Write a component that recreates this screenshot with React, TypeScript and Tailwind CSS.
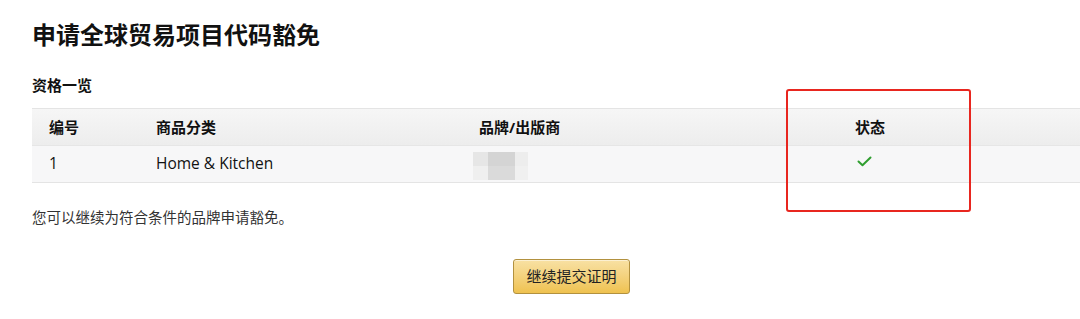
const font = { fontFamily: '"Open Sans", "Noto Sans CJK SC", sans-serif' };

function Mosaic() {
  // blurred brand name, kept as a rough pixel block
  return (
    <div className="grid grid-cols-[15px_27px_13px] grid-rows-[14px_14px]">
      <div className="bg-[#e6e6e6]" />
      <div className="bg-[#d4d4d4]" />
      <div className="bg-[#ededed]" />
      <div className="bg-[#efefef]" />
      <div className="bg-[#dadada]" />
      <div className="bg-[#f0f0f0]" />
    </div>
  );
}

function Check() {
  return (
    <svg width="15" height="11" viewBox="0 0 15 11" fill="none">
      <path d="M1.5 5.5 L5.5 9.2 L13.5 1.5" stroke="#2f9e2f" strokeWidth="2" strokeLinecap="round" strokeLinejoin="round" />
    </svg>
  );
}

export default function App() {
  return (
    <div className="relative h-[319px] w-[1080px] overflow-hidden bg-white text-[#111]" style={font}>
      <div className="pl-8 pt-[19px]">
        <h1 className="text-[24px] font-bold leading-[32px]">申请全球贸易项目代码豁免</h1>
        <h2 className="mt-[24px] text-[15px] font-bold leading-[20px]">资格一览</h2>

        <div className="mt-[13px] border-b border-t border-[#e4e4e4] text-[15px]">
          <div className="grid h-[37px] grid-cols-[107px_323px_376px_1fr] items-center border-b border-[#e6e6e6] bg-gradient-to-b from-[#f6f6f6] to-[#ededed] font-bold">
            <div className="pl-[17px]">编号</div>
            <div className="pl-[17px]">商品分类</div>
            <div className="pl-[17px]">品牌/出版商</div>
            <div className="pl-[17px]">状态</div>
          </div>
          <div className="grid h-[36px] grid-cols-[107px_323px_376px_1fr] items-center bg-[#f7f7f8] text-[15.5px]">
            <div className="pl-[17px]">1</div>
            <div className="pl-[17px]">Home &amp; Kitchen</div>
            <div className="pl-[11px] pt-[4px]"><Mosaic /></div>
            <div className="pl-[19px] pb-[6px]"><Check /></div>
          </div>
        </div>

        <p className="mt-[25px] text-[14.5px] leading-[20px] text-[#333]">您可以继续为符合条件的品牌申请豁免。</p>

        <button
          type="button"
          className="ml-[481px] mt-[31px] h-[35px] w-[117px] rounded-[3px] border border-[#b2913f] bg-gradient-to-b from-[#f8e1a3] to-[#efc24f] text-[15px] text-[#222] shadow-[inset_0_1px_0_rgba(255,255,255,0.5)]"
        >
          继续提交证明
        </button>
      </div>

      {/* annotation box */}
      <div className="absolute left-[786px] top-[89px] h-[123px] w-[185px] rounded-[3px] border-2 border-[#e8261f]" />
    </div>
  );
}
